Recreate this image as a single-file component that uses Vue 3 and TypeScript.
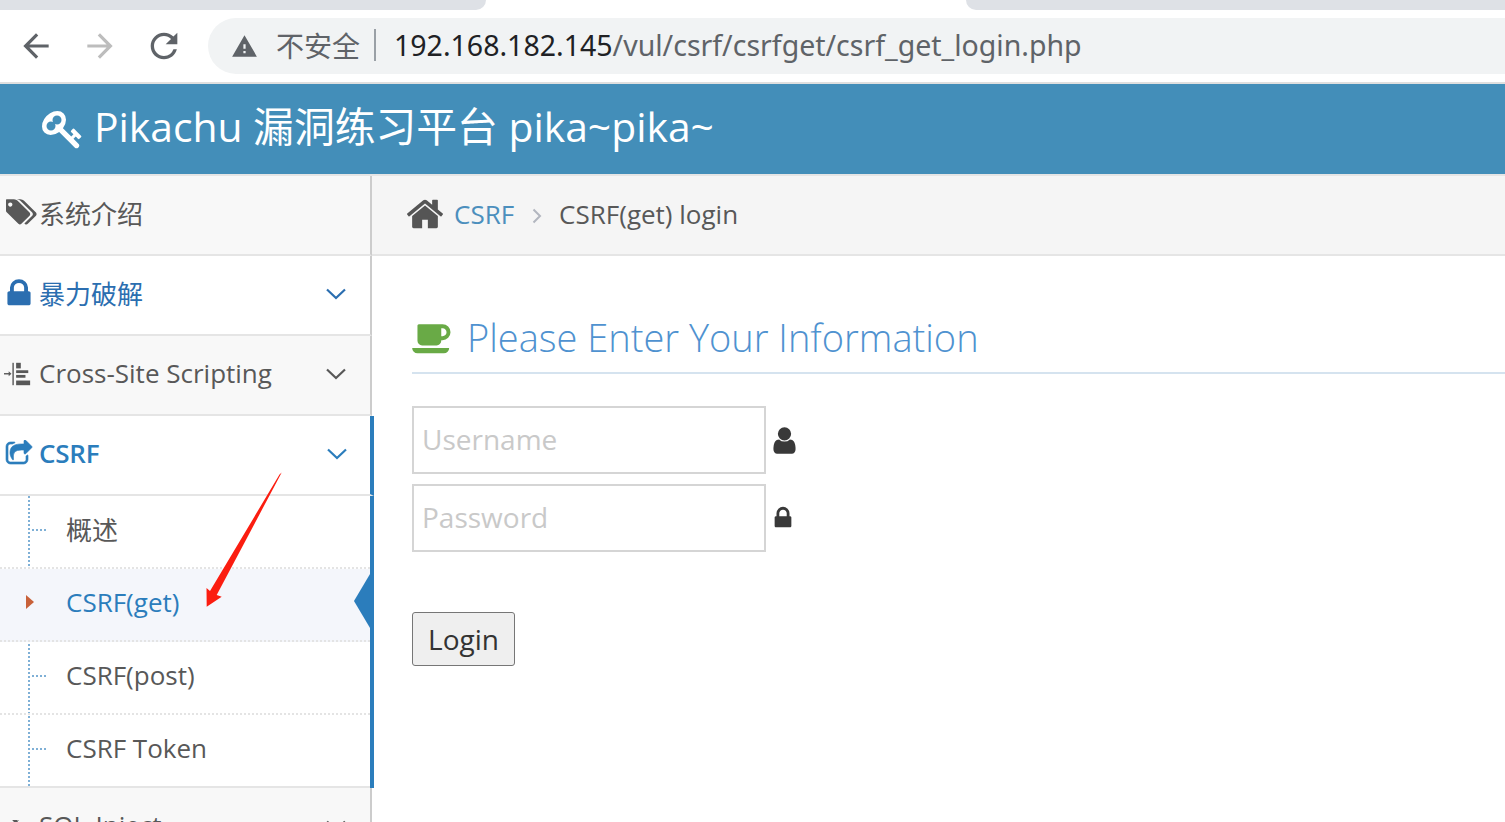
<template>
  <div class="page">
    <!-- browser tabs and toolbar -->
    <div class="tabs">
      <div class="tab-left"></div>
      <div class="tab-gap"></div>
      <div class="tab-right"></div>
    </div>
    <div class="toolbar">
      <svg class="nav back" viewBox="0 0 24 24"><path d="M20 11H7.83l5.59-5.59L12 4l-8 8 8 8 1.41-1.41L7.83 13H20v-2z" /></svg>
      <svg class="nav forward" viewBox="0 0 24 24"><path d="M4 11h12.17l-5.59-5.59L12 4l8 8-8 8-1.41-1.41L16.170 13H4v-2z" /></svg>
      <svg class="nav reload" viewBox="0 0 24 24"><path d="M17.65 6.35A7.958 7.958 0 0 0 12 4c-4.420 0-7.990 3.580-7.990 8s3.570 8 7.990 8c3.730 0 6.840-2.550 7.730-6h-2.080A5.990 5.990 0 0 1 12 18c-3.310 0-6-2.690-6-6s2.690-6 6-6c1.660 0 3.140.69 4.220 1.780L13 11h7V4l-2.350 2.350z" /></svg>
      <div class="omnibox">
        <svg class="warn" viewBox="0 0 24 24"><path d="M1 21h22L12 2 1 21zm12-3h-2v-2h2v2zm0-4h-2v-4h2v4z" /></svg>
        <span class="insecure">不安全</span>
        <span class="divider"></span>
        <span class="url"><span class="host">192.168.182.145</span>/vul/csrf/csrfget/csrf_get_login.php</span>
      </div>
    </div>

    <header class="navbar">
      <svg class="key" viewBox="0 0 1792 1792"><path :d="icons.key" /></svg>
      <span>Pikachu 漏洞练习平台 pika~pika~</span>
    </header>

    <div class="body">
      <aside class="sidebar">
        <div class="item shaded">
          <svg class="ic tags" viewBox="0 0 1920 1792"><path :d="icons.tags" /></svg>
          <span>系统介绍</span>
        </div>
        <div class="item blue">
          <svg class="ic lock" viewBox="0 0 1792 1792" preserveAspectRatio="none"><path :d="icons.lock" /></svg>
          <span>暴力破解</span>
          <svg class="chev" viewBox="0 0 20 12"><path d="M1 1.500l9 8.500 9-8.500" /></svg>
        </div>
        <div class="item shaded">
          <svg class="ic xss" viewBox="0 0 30 26">
            <rect x="0" y="12" width="6" height="1.500" />
            <path d="M5 10l3 2.700-3 2.700z" />
            <rect x="9" y="1" width="1.500" height="24" />
            <rect x="13" y="1" width="5" height="6" />
            <rect x="13" y="9" width="13" height="3" />
            <rect x="13" y="14" width="10" height="3" />
            <rect x="13" y="20" width="15" height="5" />
          </svg>
          <span>Cross-Site Scripting</span>
          <svg class="chev" viewBox="0 0 20 12"><path d="M1 1.500l9 8.500 9-8.500" /></svg>
        </div>
        <div class="item active">
          <svg class="ic share" viewBox="0 0 1792 1792"><path :d="icons.share" /></svg>
          <span>CSRF</span>
          <svg class="chev" viewBox="0 0 20 12"><path d="M1 1.500l9 8.500 9-8.500" /></svg>
        </div>
        <ul class="submenu">
          <li v-for="s in subItems" :key="s" :class="{ current: s === 'CSRF(get)' }">
            <span class="caret" v-if="s === 'CSRF(get)'"></span>
            <span class="tick" v-else></span>
            {{ s }}
          </li>
        </ul>
        <div class="item shaded">
          <svg class="ic jet" viewBox="0 0 1920 1792"><path :d="icons.jet" /></svg>
          <span>SQL-Inject</span>
          <svg class="chev" viewBox="0 0 20 12"><path d="M1 1.500l9 8.500 9-8.500" /></svg>
        </div>
      </aside>

      <main class="main">
        <div class="crumbs">
          <svg class="home" viewBox="0 0 1792 1792"><path :d="icons.home" /></svg>
          <a class="crumb-link">CSRF</a>
          <svg class="crumb-sep" viewBox="0 0 10 16"><path d="M1.500 1.500L8 8l-6.500 6.500" /></svg>
          <span>CSRF(get) login</span>
        </div>
        <div class="content">
          <h4 class="title">
            <svg class="cup" viewBox="0 0 1920 1792"><path :d="icons.coffee" /></svg>
            <span>Please Enter Your Information</span>
          </h4>
          <div class="field">
            <input type="text" placeholder="Username" />
            <svg class="field-ic user" viewBox="0 0 1792 1792"><path :d="icons.user" /></svg>
          </div>
          <div class="field">
            <input type="password" placeholder="Password" />
            <svg class="field-ic" viewBox="0 0 1792 1792"><path :d="icons.lock" /></svg>
          </div>
          <button class="login" type="button">Login</button>
        </div>
      </main>
    </div>

    <!-- red annotation arrow drawn on the screenshot -->
    <svg class="annotation" width="90" height="145" viewBox="200 468 90 145">
      <path d="M281.700 472.500L279.500 474.500L210 591L206.500 588L206.700 606.800L221.700 596.700L216.700 595Z" />
    </svg>
  </div>
</template>

<script setup lang="ts">
const subItems: string[] = ['概述', 'CSRF(get)', 'CSRF(post)', 'CSRF Token']

const icons = {
  key: 'M832 512q0-80-56-136t-136-56-136 56-56 136q0 42 19 83-41-19-83-19-80 0-136 56t-56 136 56 136 136 56 136-56 56-136q0-42-19-83 41 19 83 19 80 0 136-56t56-136zm851 704q0 17-49 66t-66 49q-9 0-28.500-16t-36.500-33-38.500-40-24.500-26l-96 96 220 220q28 28 28 68 0 42-39 81t-81 39q-40 0-68-28l-671-671q-176 131-365 131-163 0-265.500-102.500t-102.500-265.500q0-160 95-313t248-248 313-95q163 0 265.500 102.500t102.500 265.500q0 189-131 365l355 355 96-96q-3-3-26-24.500t-40-38.500-33-36.500-16-28.500q0-17 49-66t66-49q13 0 23 10 6 6 46 44.500t82 79.500 86.500 86 73 78 28.500 41z',
  tags: 'M384 448q0-53-37.500-90.500t-90.500-37.500-90.500 37.500-37.500 90.500 37.500 90.500 90.500 37.500 90.500-37.500 37.500-90.500zm1067 576q0 53-37 90l-491 492q-39 37-91 37-53 0-90-37l-715-716q-38-37-64.500-101t-26.500-117v-416q0-52 38-90t90-38h416q53 0 117 26.500t102 64.500l715 714q37 39 37 91zm384 0q0 53-37 90l-491 492q-39 37-91 37-36 0-59-14t-53-45l470-470q37-37 37-90 0-52-37-91l-715-714q-38-38-102-64.500t-117-26.500h224q53 0 117 26.500t102 64.500l715 714q37 39 37 91z',
  lock: 'M640 768h512v-192q0-106-75-181t-181-75-181 75-75 181v192zm832 96v576q0 40-28 68t-68 28h-960q-40 0-68-28t-28-68v-576q0-40 28-68t68-28h32v-192q0-184 132-316t316-132 316 132 132 316v192h32q40 0 68 28t28 68z',
  share: 'M1472 989v259q0 119-84.500 203.500t-203.500 84.500h-832q-119 0-203.500-84.500t-84.500-203.500v-832q0-119 84.500-203.500t203.500-84.500h255q13 0 22.500 9.500t9.500 22.500q0 27-26 32-77 26-133 60-10 4-16 4h-112q-66 0-113 47t-47 113v832q0 66 47 113t113 47h832q66 0 113-47t47-113v-214q0-19 18-29 28-13 54-37 16-16 35-8 21 9 21 29zm237-496l-384 384q-18 19-45 19-12 0-25-5-39-17-39-59v-192h-160q-323 0-438 131-119 137-74 473 3 23-20 34-8 2-12 2-16 0-26-13-10-14-21-31t-39.500-68.500-49.500-99.500-38.500-114-17.500-122q0-49 3.500-91t14-90 28-88 47-81.500 68.500-74 94.500-61.500 124.500-48.500 159.500-30.500 196.500-11h160v-192q0-42 39-59 13-5 25-5 26 0 45 19l384 384q19 19 19 45t-19 45z',
  home: 'M1472 992v480q0 26-19 45t-45 19h-384v-384h-256v384h-384q-26 0-45-19t-19-45v-480q0-1 .5-3t.5-3l575-474 575 474q1 2 1 6zm223-69l-62 74q-8 9-21 11h-3q-13 0-21-7l-692-577-692 577q-12 8-24 7-13-2-21-11l-62-74q-8-10-7-23.500t11-21.500l719-599q32-26 76-26t76 26l244 204v-195q0-14 9-23t23-9h192q14 0 23 9t9 23v408l219 182q10 8 11 21.500t-7 23.500z',
  coffee: 'M1664 640q0-80-56-136t-136-56h-64v384h64q80 0 136-56t56-136zm-1664 768h1792q0 106-75 181t-181 75h-1280q-106 0-181-75t-75-181zm1856-768q0 159-112.500 271.500t-271.500 112.500h-64v32q0 92-66 158t-158 66h-704q-92 0-158-66t-66-158v-736q0-26 19-45t45-19h1152q159 0 271.500 112.500t112.500 271.500z',
  user: 'M1536 1399q0 109-62.500 187t-150.500 78h-854q-88 0-150.500-78t-62.500-187q0-85 8.500-160.500t31.500-152 58.500-131 94-89 134.500-34.500q131 128 313 128t313-128q76 0 134.500 34.500t94 89 58.500 131 31.500 152 8.500 160.500zm-256-887q0 159-112.500 271.500t-271.500 112.500-271.500-112.500-112.500-271.500 112.500-271.500 271.500-112.500 271.500 112.500 112.500 271.500z',
  jet: 'M1920 896q-1 32-288 96l-352 32-224 64h-64l-293 352h69q26 0 45 4.500t19 11.500-19 11.500-45 4.500h-320l-32-32v-32h64v-416h-160l-192 224h-96l-32-32v-192h32v-32h128v-8l-192-24v-128l192-24v-8h-128v-32h-32v-192l32-32h96l192 224h160v-416h-64v-32l32-32h320q26 0 45 4.500t19 11.500-19 11.500-45 4.500h-69l293 352h64l224 64 352 32q261 58 287 93z',
}
</script>

<style>
html,
body {
  margin: 0;
  overflow: hidden;
  background: #fff;
}
</style>

<style scoped>
.page {
  position: relative;
  width: 1505px;
  height: 822px;
  overflow: hidden;
  font-family: "Open Sans", "Noto Sans CJK SC", sans-serif;
  color: #585858;
}

.tabs {
  display: flex;
  height: 10px;
}
.tab-left {
  width: 486px;
  background: #dee1e6;
  border-bottom-right-radius: 12px;
}
.tab-gap {
  width: 480px;
}
.tab-right {
  flex: 1;
  background: #dee1e6;
  border-bottom-left-radius: 12px;
}

.toolbar {
  height: 72px;
  border-bottom: 2px solid #dfdfdf;
  display: flex;
  align-items: flex-start;
  box-sizing: content-box;
}
.nav {
  width: 38px;
  height: 38px;
  margin-top: 17px;
  fill: #5f6368;
  flex: none;
}
.back {
  margin-left: 17px;
}
.forward {
  margin-left: 26px;
  fill: #bdbdbd;
}
.reload {
  width: 40px;
  height: 40px;
  margin-top: 16px;
  margin-left: 25px;
}
.omnibox {
  margin: 8px 0 0 24px;
  flex: 1;
  height: 56px;
  box-sizing: border-box;
  background: #f1f3f4;
  border-radius: 28px 0 0 28px;
  display: flex;
  align-items: center;
  padding-left: 23px;
  padding-bottom: 2px;
  font-family: "Noto Sans", "Noto Sans CJK SC", sans-serif;
}
.warn {
  width: 27px;
  height: 27px;
  fill: #5f6368;
  margin-top: 2px;
}
.insecure {
  margin-left: 18px;
  font-size: 28px;
  color: #5f6368;
}
.divider {
  width: 2px;
  height: 32px;
  background: #9aa0a6;
  margin: 0 18px 0 14px;
}
.url {
  font-size: 28.5px;
  color: #5f6368;
  white-space: nowrap;
}
.host {
  color: #202124;
}

.navbar {
  height: 90px;
  box-sizing: border-box;
  background: #438eb9;
  color: #fff;
  display: flex;
  align-items: center;
  padding-left: 42px;
  padding-bottom: 10px;
  gap: 10px;
  font-size: 40.8px;
}
.key {
  width: 42px;
  height: 42px;
  fill: #fff;
  margin-top: 10px;
}

.body {
  display: flex;
  height: 648px;
}

.sidebar {
  width: 372px;
  flex: none;
  box-sizing: border-box;
  border-top: 2px solid #e5e5e5;
  font-size: 26px;
  position: relative;
}
.item {
  height: 80px;
  box-sizing: border-box;
  border-bottom: 2px solid #e5e5e5;
  border-right: 2px solid #ccc;
  display: flex;
  align-items: center;
  position: relative;
  padding-left: 39px;
  padding-bottom: 4px;
  background: #fff;
}
.shaded {
  background: #f8f8f8;
}
.blue {
  color: #2b6eb0;
}
.active {
  color: #2b7dbc;
  font-weight: 600;
  letter-spacing: -0.2px;
  border-right: 4px solid #2b7dbc;
  width: 374px;
}
.ic {
  position: absolute;
  top: 50%;
  fill: currentColor;
}
.tags {
  left: 6px;
  width: 32px;
  height: 30px;
  margin-top: -18px;
}
.lock {
  left: 1px;
  width: 36px;
  height: 33px;
  margin-top: -18px;
}
.xss {
  left: 4px;
  width: 28px;
  height: 26px;
  margin-top: -14px;
}
.share {
  left: 5px;
  width: 28px;
  height: 28px;
  margin-top: -15px;
  stroke: currentColor;
  stroke-width: 40;
}
.jet {
  left: 6px;
  width: 30px;
  height: 30px;
  margin-top: -12px;
}
.chev {
  position: absolute;
  right: 24px;
  top: 50%;
  width: 20px;
  height: 12px;
  margin-top: -7px;
  fill: none;
  stroke: currentColor;
  stroke-width: 2.200;
}
.active .chev {
  right: 23px;
}

.submenu {
  margin: 0;
  padding: 0;
  list-style: none;
  width: 374px;
  box-sizing: border-box;
  border-right: 4px solid #2b7dbc;
  position: relative;
}
.submenu::before {
  content: "";
  position: absolute;
  left: 28px;
  top: 0;
  bottom: 2px;
  border-left: 2px dotted #7fb0d6;
}
.submenu li {
  position: relative;
  height: 73px;
  box-sizing: border-box;
  padding-left: 66px;
  padding-bottom: 6px;
  display: flex;
  align-items: center;
  border-bottom: 2px dotted #e4e4e4;
}
.submenu li:last-child {
  border-bottom: 2px solid #e5e5e5;
}
.submenu li.current {
  background: #f4f6fb;
  color: #2b7dbc;
}
.submenu li.current::after {
  content: "";
  position: absolute;
  right: 0;
  top: 5px;
  width: 0;
  height: 0;
  border-top: 27px solid transparent;
  border-bottom: 27px solid transparent;
  border-right: 16px solid #2b7dbc;
}
.tick {
  position: absolute;
  left: 32px;
  top: 50%;
  margin-top: -3px;
  width: 14px;
  border-top: 2px dotted #7fb0d6;
}
.caret {
  position: absolute;
  left: 26px;
  top: 20px;
  height: 27px;
  width: 8px;
  background: #f4f6fb;
}
.caret::before {
  content: "";
  position: absolute;
  top: 6px;
  left: 0;
  border-top: 7px solid transparent;
  border-bottom: 7px solid transparent;
  border-left: 8px solid #c86139;
}

.main {
  flex: 1;
  min-width: 0;
}
.crumbs {
  height: 82px;
  box-sizing: border-box;
  background: #f5f5f5;
  border-top: 2px solid #e5e5e5;
  border-bottom: 2px solid #e5e5e5;
  display: flex;
  align-items: center;
  padding-left: 34px;
  padding-bottom: 2px;
  font-size: 26px;
}
.home {
  width: 40px;
  height: 40px;
  fill: #555;
  margin-left: -1px;
}
.crumb-link {
  margin-left: 9px;
  color: #4c8fbd;
}
.crumb-sep {
  width: 10px;
  height: 16px;
  margin: 4px 17px 0 18px;
  fill: none;
  stroke: #b2b6bf;
  stroke-width: 2;
}

.content {
  padding-left: 40px;
}
.title {
  margin: 0 0 32px;
  height: 118px;
  box-sizing: border-box;
  padding-top: 46px;
  border-bottom: 2px solid #d5e3ef;
  display: flex;
  align-items: center;
  font-size: 38px;
  font-weight: 300;
  color: #4f92d0;
  line-height: 50px;
}
.cup {
  width: 40px;
  height: 37px;
  fill: #69aa46;
  margin-right: 15px;
}
.field {
  display: flex;
  align-items: center;
  gap: 4px;
  margin-bottom: 10px;
}
.field input {
  width: 354px;
  height: 68px;
  box-sizing: border-box;
  border: 2px solid #d5d5d5;
  padding: 0 8px 2px;
  font-family: inherit;
  font-size: 28px;
  outline: none;
  background: #fff;
}
.field input::placeholder {
  color: #c9c9c9;
  opacity: 1;
}
.field-ic {
  width: 26px;
  height: 26px;
  fill: #393939;
}
.field-ic.user {
  width: 31px;
  height: 31px;
  margin-left: -1px;
}
.login {
  display: block;
  margin-top: 60px;
  width: 103px;
  height: 54px;
  box-sizing: border-box;
  background: #efefef;
  border: 1px solid #767676;
  border-radius: 3px;
  font-family: inherit;
  font-size: 28px;
  color: #333;
  padding: 0;
}

.annotation {
  position: absolute;
  left: 200px;
  top: 468px;
  fill: #fb1d10;
}
</style>
